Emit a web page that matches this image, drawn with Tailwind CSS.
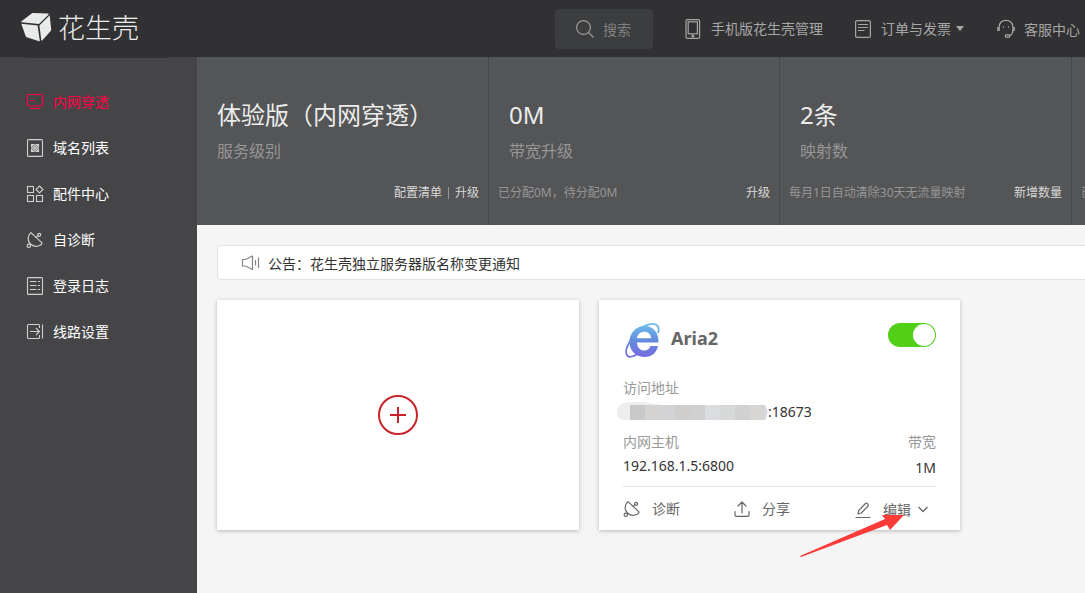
<!DOCTYPE html>
<html lang="zh-CN">
<head>
<meta charset="utf-8">
<meta name="viewport" content="width=device-width, initial-scale=1">
<title>花生壳 - 内网穿透</title>
<script src="https://cdn.jsdelivr.net/npm/@tailwindcss/browser@4"></script>
</head>
<body class="flex min-h-screen flex-col overflow-x-hidden bg-[#f5f5f5] font-['Noto_Sans','Noto_Sans_CJK_SC',sans-serif] text-sm text-[#333]">

<svg class="hidden" aria-hidden="true">
  <symbol id="dish" viewBox="0 0 18 18">
    <g fill="none" stroke="currentColor" stroke-width="1.2" stroke-linecap="round" stroke-linejoin="round">
      <path d="M5 1.6 15.8 11.6C16.8 12.8 13.4 15.4 9.8 15.3 5.600 15.200 2.200 11.800 2.200 8 2.200 5.200 3.600 2.800 5 1.600Z"/>
      <path d="M10.200 6.400 12 4.800"/>
      <circle cx="13.200" cy="3.800" r="1.500"/>
      <circle cx="2.800" cy="14.800" r="1.700"/>
    </g>
  </symbol>
</svg>

<header class="flex h-[57px] shrink-0 items-center bg-[#313133] pl-5 pr-[5px] text-[#a6a6a6]">
  <a href="#" class="flex items-center gap-1.5 pb-1 text-[#eceeed]">
    <svg class="h-8 w-8" viewBox="0 0 32 32" fill="#e9ebea" aria-hidden="true">
      <path d="M12 2.300C12.500 2 13 2 13.600 2L27.800 2.600C28.800 2.600 28.900 3.200 28.200 3.900L19 13 1.700 11.200C1 11.100 1 10.600 1.500 10.200Z"/>
      <path d="M1.300 12.700 17.600 14.500 19.800 29.800C19.800 30.400 19.600 30.500 19 30.200L6.800 26.200C6.200 26 5.900 25.700 5.700 25.200Z"/>
      <path d="M19.400 14.400 29.700 4.200 31.200 18.500C31.200 19.200 31.100 19.600 30.700 20.100L22.400 29.200C21.800 29.800 21.400 29.800 21.300 29Z"/>
    </svg>
    <span class="font-['Noto_Sans_CJK_SC',sans-serif] text-[27px] leading-9 font-light">花生壳</span>
  </a>
  <div class="ml-auto flex items-center">
    <label class="flex h-10 w-[98px] items-center rounded bg-[#3c3d3f] pl-[21px]">
      <svg class="h-[18px] w-[18px] shrink-0" viewBox="0 0 18 18" fill="none" stroke="#9a9a9a" stroke-width="1.200" aria-hidden="true"><circle cx="7.500" cy="7.500" r="6.900"/><path d="M12.500 12.500 17.500 17.500"/></svg>
      <input type="text" aria-label="搜索" placeholder="搜索" class="ml-[9px] w-10 pt-0.5 text-sm outline-none placeholder:text-[#808080]">
    </label>
    <a href="#" class="ml-8 flex items-center gap-2.5">
      <svg class="h-5 w-4" viewBox="0 0 16 20" fill="none" stroke="currentColor" stroke-width="1.200" aria-hidden="true"><rect x="1" y=".6" width="13.600" height="18.800" rx="1.500"/><rect x="3.200" y="2.800" width="9.200" height="12"/><circle cx="7.800" cy="17" r=".9" fill="currentColor"/></svg>
      手机版花生壳管理
    </a>
    <button type="button" class="ml-8 flex items-center">
      <svg class="h-[18px] w-4" viewBox="0 0 16 18" fill="none" stroke="currentColor" stroke-width="1.200" aria-hidden="true"><rect x=".6" y=".6" width="14.800" height="16.800" rx="1.500"/><path d="M3 4.500h10M3 7.500h10M3 10.500h6.500"/></svg>
      <span class="ml-2.5">订单与发票</span>
      <svg class="ml-[5px] h-[5px] w-2" viewBox="0 0 8 5" aria-hidden="true"><path d="M0 0h8L4 5Z" fill="currentColor"/></svg>
    </button>
    <a href="#" class="ml-8 flex items-center gap-2">
      <svg class="h-5 w-5" viewBox="0 0 20 20" fill="none" stroke="currentColor" stroke-width="1.200" stroke-linecap="round" aria-hidden="true"><path d="M3.200 11.500H1.800V8.500H3.200V7.500C3.500 3.500 6 1.300 10 1.300S16.500 3.500 16.800 7.500V8.500H18.200V11.500H16.800V12C16.600 14.500 15.500 16 13.800 16.800M3.200 8.500V11.500M16.800 8.500V11.500"/><rect x="9.500" y="15.800" width="4.200" height="2.400" rx=".6"/><path d="M7.500 7.800v.4M12.500 7.800v.4"/></svg>
      <span class="pt-0.5">客服中心</span>
    </a>
  </div>
</header>

<div class="flex flex-1">
  <nav class="w-[197px] shrink-0 bg-[#454547] text-white" aria-label="主导航">
    <div class="ml-[25px] h-px w-36 bg-[#313133]"></div>
    <ul class="pt-[21px]">
      <li><a href="#" class="flex h-[46px] items-center gap-[9px] pl-[26px] text-[#ff0044]">
        <svg class="h-[18px] w-[18px]" viewBox="0 0 18 18" fill="none" stroke="currentColor" stroke-width="1.200" aria-hidden="true"><rect x="1.500" y="1.500" width="15" height="11.500" rx="1"/><path d="M4 7.500h4M4 15.500h10"/></svg>内网穿透</a></li>
      <li><a href="#" class="flex h-[46px] items-center gap-[9px] pl-[26px]">
        <svg class="h-[18px] w-[18px]" viewBox="0 0 18 18" fill="none" stroke="#d0d0d0" stroke-width="1.100" aria-hidden="true"><rect x="1.500" y=".6" width="15" height="16.800" rx="1"/><path d="M6 6 12 12M12 6 6 12"/><path d="M5.500 5.500h2.500L9 7l1-1.500h2.500V8L11 9l1.500 1v2.500H10L9 11l-1 1.500H5.500V10L7 9 5.500 8Z"/></svg>域名列表</a></li>
      <li><a href="#" class="flex h-[46px] items-center gap-[9px] pl-[26px]">
        <svg class="h-[18px] w-[18px]" viewBox="0 0 18 18" fill="none" stroke="#d0d0d0" stroke-width="1.100" aria-hidden="true"><rect x="1.500" y="1.500" width="6" height="6"/><rect x="1.500" y="10.500" width="6" height="6"/><rect x="10.500" y="10.500" width="6" height="6"/><path d="M13.500 1 17 4.500 13.500 8 10 4.500Z"/></svg>配件中心</a></li>
      <li><a href="#" class="flex h-[46px] items-center gap-[9px] pl-[26px]">
        <svg class="h-[18px] w-[18px] text-[#d0d0d0]" aria-hidden="true"><use href="#dish"/></svg>自诊断</a></li>
      <li><a href="#" class="flex h-[46px] items-center gap-[9px] pl-[26px]">
        <svg class="h-[18px] w-[18px]" viewBox="0 0 18 18" fill="none" stroke="#d0d0d0" stroke-width="1.100" aria-hidden="true"><rect x="1.500" y=".6" width="15" height="16.800" rx="1"/><path d="M4 4.500h6.500M4 8.500h6.500M4 12.500h6.500M12 4.500h2M12 8.500h2M12 12.500h2"/></svg>登录日志</a></li>
      <li><a href="#" class="flex h-[46px] items-center gap-[9px] pl-[26px]">
        <svg class="h-[18px] w-[18px]" viewBox="0 0 18 18" fill="none" stroke="#d0d0d0" stroke-width="1.100" aria-hidden="true"><path d="M13.500 5V2.500C13.500 2 13 1.500 12.500 1.500H2.500C2 1.500 1.500 2 1.500 2.500V14.500C1.500 15 2 15.500 2.500 15.500H12.500C13 15.500 13.500 15 13.500 14.500V12M16.500 1.500V15.500M4 8.500H13.500M10 5 13.500 8.500 10 12"/></svg>线路设置</a></li>
    </ul>
  </nav>

  <main class="min-w-0 flex-1 overflow-hidden">
    <section class="flex bg-[#545557] text-xs text-[#969696]">
      <div class="w-[292px] shrink-0 border-r border-[#48494b] pt-10 pb-[23px]">
        <h2 class="pl-5 text-2xl leading-9 text-[#ececec]">体验版（内网穿透）</h2>
        <p class="mt-1.5 pl-5 text-base leading-6">服务级别</p>
        <div class="mt-[21px] flex items-center justify-end px-[9px] leading-[18px] text-[#d8d8d8]"><a href="#">配置清单</a><span class="mx-1.5 h-3 w-px bg-[#969696]"></span><a href="#">升级</a></div>
      </div>
      <div class="w-[291px] shrink-0 border-r border-[#48494b] pt-10 pb-[23px]">
        <h2 class="pl-5 text-2xl leading-9 text-[#ececec]">0M</h2>
        <p class="mt-1.5 pl-5 text-base leading-6">带宽升级</p>
        <div class="mt-[21px] flex justify-between px-[9px] leading-[18px]"><span>已分配0M，待分配0M</span><a href="#" class="text-[#d8d8d8]">升级</a></div>
      </div>
      <div class="w-[292px] shrink-0 border-r border-[#48494b] pt-10 pb-[23px]">
        <h2 class="pl-5 text-2xl leading-9 text-[#ececec]">2条</h2>
        <p class="mt-1.5 pl-5 text-base leading-6">映射数</p>
        <div class="mt-[21px] flex justify-between px-[9px] leading-[18px]"><span>每月1日自动清除30天无流量映射</span><a href="#" class="text-[#d8d8d8]">新增数量</a></div>
      </div>
      <div class="flex w-[292px] shrink-0 items-end px-[9px] pb-[23px] leading-[18px]">已</div>
    </section>

    <div class="ml-5 mt-5 flex h-[35px] items-center gap-[7px] rounded-l border border-r-0 border-[#e3e3e3] bg-white pl-[23px]">
      <svg class="h-[18px] w-5" viewBox="0 0 20 18" fill="none" stroke="#858585" stroke-width="1.200" stroke-linejoin="round" aria-hidden="true"><path d="M1.500 5.500H4.500L11.500 2V15.500L4.500 12H1.500ZM14.500 6V11.500M17.500 3.500V14"/></svg>
      <a href="#" class="pt-0.5">公告：花生壳独立服务器版名称变更通知</a>
    </div>

    <div class="ml-5 mt-5 flex flex-wrap gap-5 pb-6">
      <div class="flex min-h-[230px] w-[362px] items-center justify-center bg-white shadow-[0_1px_4px_rgba(0,0,0,0.25)]">
        <button type="button" aria-label="添加映射" class="flex h-10 w-10 items-center justify-center rounded-full border-2 border-[#c9242b]">
          <svg class="h-4 w-4" viewBox="0 0 16 16" stroke="#c9242b" stroke-width="2" aria-hidden="true"><path d="M0 8h16M8 0v16"/></svg>
        </button>
      </div>

      <article class="relative w-[361px] bg-white px-6 pt-[22px] shadow-[0_1px_4px_rgba(0,0,0,0.25)]">
        <div class="flex items-start">
          <svg class="ml-px h-9 w-9" viewBox="0 0 36 36" aria-hidden="true">
            <defs><linearGradient id="ie" gradientUnits="userSpaceOnUse" x1="0" y1="0" x2="0" y2="36"><stop offset="0" stop-color="#70c2ee"/><stop offset=".5" stop-color="#648ddd"/><stop offset="1" stop-color="#7869de"/></linearGradient></defs>
            <path fill="url(#ie)" fill-rule="evenodd" d="M34.500 20.500H13C13 26 17 28.500 20 28.500 23 28.500 25.500 27 26.500 24H34C32.500 31 27.500 35 21 35 12 35 5.500 29 5.500 20 5.500 11 12 4 20.500 4 29.500 4 35 11 34.500 20.500ZM13 16.300H27C27 12 24 9.700 20.500 9.700 16.500 9.700 13.500 12 13 16.300Z"/>
            <path fill="none" stroke="url(#ie)" stroke-width="1.800" d="M34 11C36 5 33 1 27 2 18 3 9 12 4 23 0 31 3 36 8 34.500 10 34 12 33 14 32"/>
          </svg>
          <h3 class="ml-[11px] text-lg leading-8 font-bold text-[#666]">Aria2</h3>
          <input type="checkbox" checked aria-label="启用 Aria2" class="ml-auto mt-px flex h-6 w-12 appearance-none items-center justify-end rounded-full bg-[#52d017] px-px before:h-[22px] before:w-[22px] before:rounded-full before:bg-white">
        </div>
        <p class="mt-[18px] leading-6 text-[#999]">访问地址</p>
        <div class="-ml-1.5 flex items-center leading-6">
          <svg class="h-5 w-[151px]" viewBox="0 0 151 20" aria-hidden="true">
            <path fill="#eee" d="M14 18H8C3 18 0 15 0 10S4 1 11 0C22-1 34 1 43 3V18Z"/>
            <path fill="#c8c9c8" d="M13 3h15v15H13z"/><path fill="#d4d3d1" d="M28 3h15v15H28z"/><path fill="#d3d3d5" d="M43 3h15v15H43z"/><path fill="#cfcecd" d="M58 3h15v15H58z"/><path fill="#d0d0d0" d="M73 3h15v15H73z"/><path fill="#dbdcdf" d="M88 3h15v15H88z"/><path fill="#d7d9d8" d="M103 3h15v15H103z"/><path fill="#d1d1d2" d="M118 3h15v15H118z"/><path fill="#d7d6d2" d="M133 3h15v15H133z"/><path fill="#dadbdf" d="M148 3q5 7 0 15z"/>
          </svg>
          <span>:18673</span>
        </div>
        <div class="mt-1.5 flex justify-between border-b border-[#e3e3e3] pb-1.5 leading-6">
          <div><p class="text-[#999]">内网主机</p><p>192.168.1.5:6800</p></div>
          <div class="text-right"><p class="text-[#999]">带宽</p><p class="pt-0.5">1M</p></div>
        </div>
        <div class="grid h-[43px] grid-cols-[110px_120px_auto] items-center text-[#666]">
          <button type="button" class="flex items-center gap-[11px]"><svg class="h-[18px] w-[18px]" aria-hidden="true"><use href="#dish"/></svg>诊断</button>
          <button type="button" class="flex items-center gap-[11px]"><svg class="h-[18px] w-[18px]" viewBox="0 0 18 18" fill="none" stroke="currentColor" stroke-width="1.200" stroke-linecap="round" stroke-linejoin="round" aria-hidden="true"><path d="M2 11.500V15C2 15.800 2.500 16.300 3.200 16.300H14.800C15.500 16.300 16 15.800 16 15V11.500M9 13V2M5 6 9 2 13 6"/></svg>分享</button>
          <button type="button" class="flex items-center pl-px pt-0.5"><svg class="h-[18px] w-[18px]" viewBox="0 0 18 18" fill="none" stroke="currentColor" stroke-width="1.200" stroke-linecap="round" stroke-linejoin="round" aria-hidden="true"><path d="M4 13 4.600 9.600 11.500 2.500C12.500 1.500 15 3.500 14 5L7.300 12ZM2 16.500H16"/></svg><span class="ml-[11px]">编辑</span><svg class="ml-1.5 h-3 w-3" viewBox="0 0 12 12" fill="none" stroke="currentColor" stroke-width="1.300" aria-hidden="true"><path d="M1.500 3 6 7.500 10.500 3"/></svg></button>
        </div>
        <svg class="pointer-events-none absolute left-[200px] top-[212px] h-[46px] w-[106px]" viewBox="0 0 106 46" aria-hidden="true"><path fill="#fb3b37" d="M1 44 86 7 83 3 105 3 91 18 88 13 2 45Z"/></svg>
      </article>
    </div>
  </main>
</div>
</body>
</html>
